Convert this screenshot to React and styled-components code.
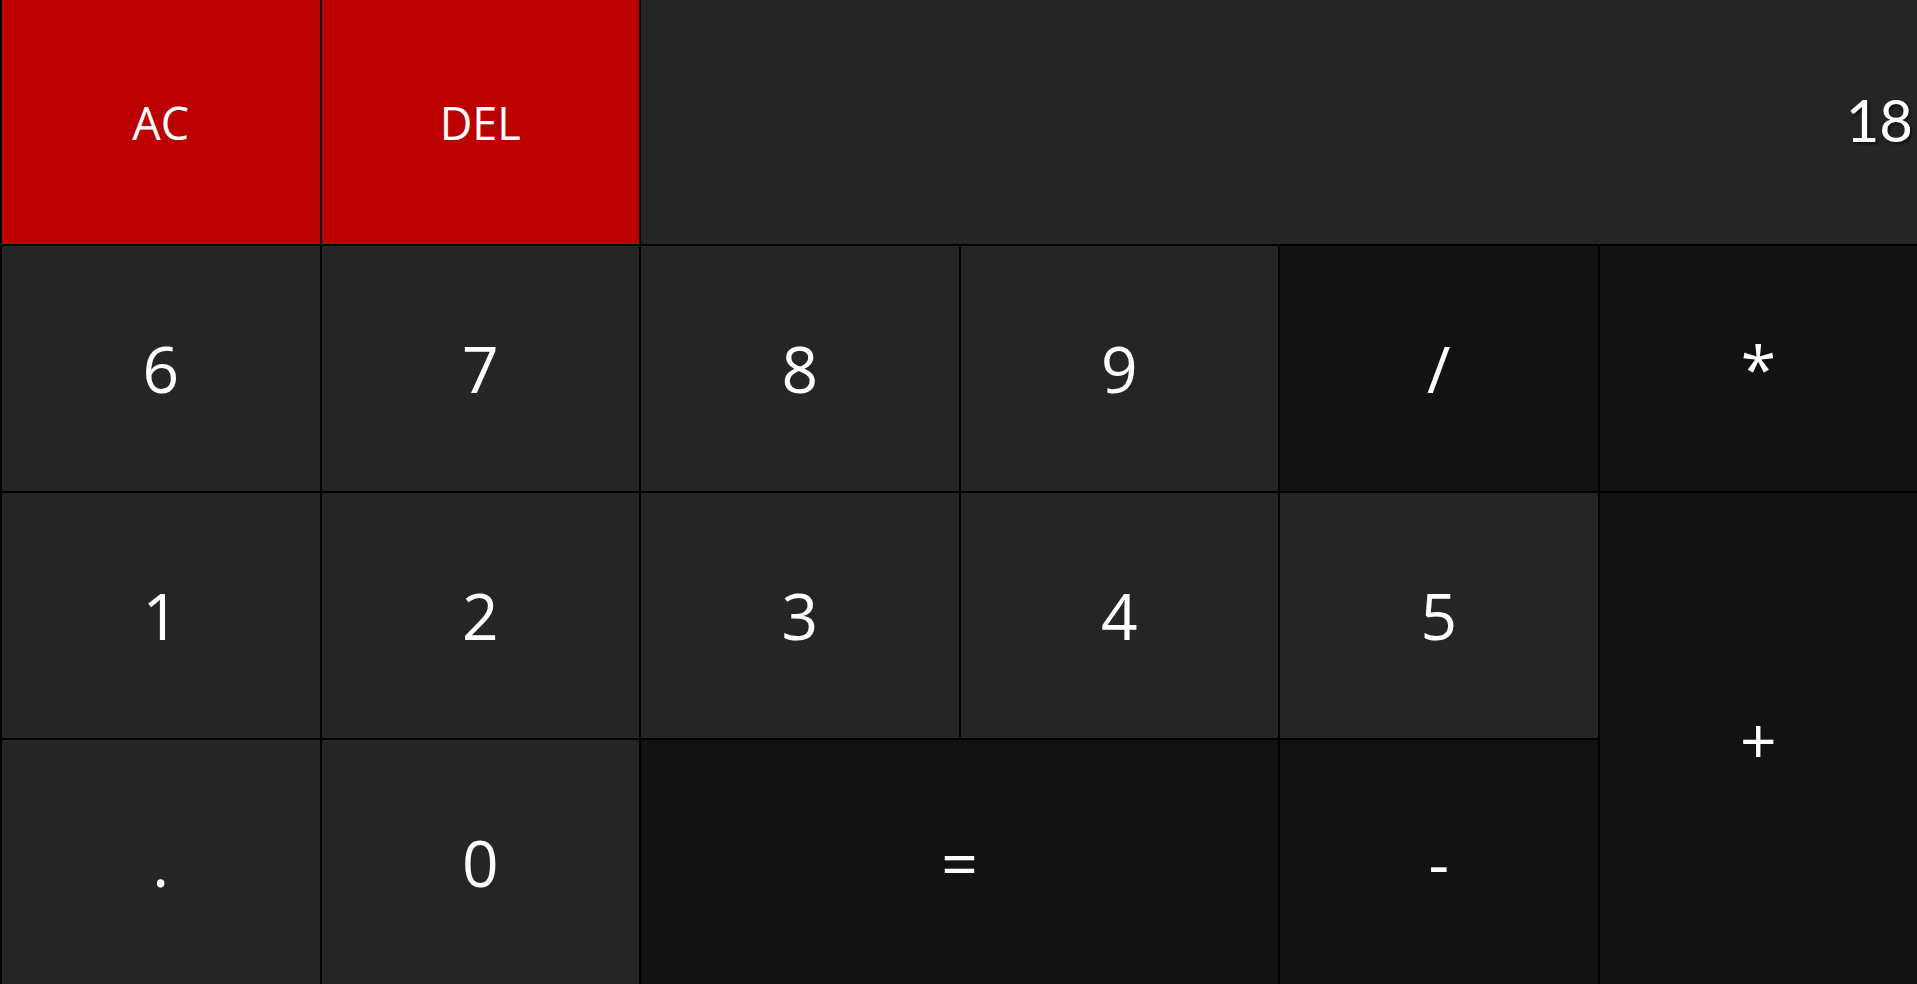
import React, { useState } from 'react';
import styled, { createGlobalStyle } from 'styled-components';

const GlobalStyle = createGlobalStyle`
	* {
		box-sizing: border-box;
	}
	body {
		margin: 0;
		background-color: #000;
		font-family: 'Open Sans', 'Noto Sans', sans-serif;
	}
`;

const keys = [
	{ label: 'AC', kind: 'danger' },
	{ label: 'DEL', kind: 'danger' },
	{ label: 'display' },
	{ label: '6' },
	{ label: '7' },
	{ label: '8' },
	{ label: '9' },
	{ label: '/', kind: 'op' },
	{ label: '*', kind: 'op' },
	{ label: '1' },
	{ label: '2' },
	{ label: '3' },
	{ label: '4' },
	{ label: '5' },
	{ label: '+', kind: 'op', rows: 2 },
	{ label: '.' },
	{ label: '0' },
	{ label: '=', kind: 'op', cols: 2 },
	{ label: '-', kind: 'op' },
];

function App() {
	const [value] = useState('18');

	return (
		<>
			<GlobalStyle />
			<Wrapper>
				{keys.map((key) =>
					key.label === 'display' ? (
						<Display key='display'>{value}</Display>
					) : (
						<Key
							key={key.label}
							$kind={key.kind}
							$cols={key.cols}
							$rows={key.rows}>
							{key.label}
						</Key>
					)
				)}
			</Wrapper>
		</>
	);
}

const Wrapper = styled.div`
	display: grid;
	grid-template-columns: repeat(6, 1fr);
	grid-template-rows: 244px repeat(3, 245px);
	gap: 2px;
	padding-left: 2px;
	background-color: #000;
	width: 100%;
`;

const Display = styled.div`
	grid-column: span 4;
	display: flex;
	align-items: center;
	justify-content: flex-end;
	padding: 0 4px 6px 0;
	background-color: #252525;
	color: #fff;
	font-family: 'Lato', 'Open Sans', sans-serif;
	font-size: 58px;
	text-shadow: 2px 2px 3px rgba(0, 0, 0, 0.6);
`;

const Key = styled.button`
	grid-column: span ${(p) => p.$cols || 1};
	grid-row: span ${(p) => p.$rows || 1};
	border: none;
	margin: 0;
	padding: 0;
	color: #fff;
	font-family: 'Open Sans', 'Noto Sans', sans-serif;
	font-size: ${(p) => (p.$kind === 'danger' ? '45px' : '64px')};
	background-color: ${(p) =>
		p.$kind === 'danger'
			? '#bb0000'
			: p.$kind === 'op'
			? '#121212'
			: '#252525'};
	cursor: pointer;

	&:focus {
		outline: none;
	}
`;

export default App;
